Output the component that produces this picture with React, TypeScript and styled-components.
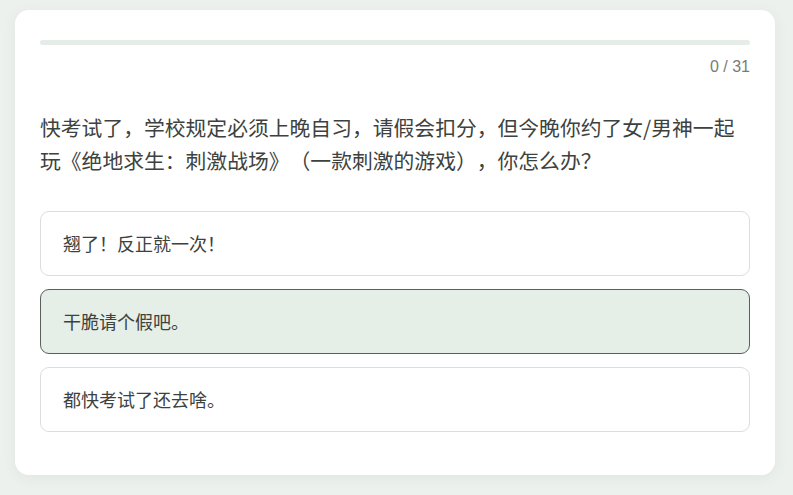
import styled, { createGlobalStyle } from 'styled-components'

const GlobalStyle = createGlobalStyle`
  html, body {
    margin: 0;
    padding: 0;
    background: #edf1ee;
  }
  body {
    font-family: "Noto Sans CJK SC", "Noto Sans", "Liberation Sans", sans-serif;
    color: #3d423e;
    text-spacing-trim: space-all;
  }
`

const Page = styled('div')`
  padding: 10px 18px 20px 15px;
`

const Card = styled('div')`
  width: 760px;
  box-sizing: border-box;
  background: #fff;
  border-radius: 14px;
  box-shadow: 0 3px 14px rgba(60, 80, 65, 0.07);
  padding: 30px 25px;
`

const Progress = styled('div')`
  height: 5px;
  border-radius: 3px;
  background: #e6ece8;
  overflow: hidden;
`

const ProgressFill = styled('div')`
  height: 100%;
  background: #6f8a74;
`

const Counter = styled('div')`
  margin-top: 11px;
  text-align: right;
  font-family: "Liberation Sans", Arial, sans-serif;
  font-size: 16px;
  line-height: 22px;
  color: #777c78;
`

const Question = styled('p')`
  margin: 33px 0 33px;
  font-size: 20.8px;
  line-height: 33.3px;
  color: #3d423e;
`

const Options = styled('div')`
  display: flex;
  flex-direction: column;
`

const Option = styled('div')<{ $selected?: boolean }>`
  margin-bottom: 13px;
  padding: 20px 22px;
  font-size: 18px;
  line-height: 23px;
  border-radius: 9px;
  border: 1px solid ${(p) => (p.$selected ? '#56615a' : '#dcdedc')};
  background: ${(p) => (p.$selected ? '#e6efe7' : '#fff')};
  color: #3d423e;
  cursor: pointer;
`

const options = ['翘了！反正就一次！', '干脆请个假吧。', '都快考试了还去啥。']

export default function App() {
  const current = 0
  const total = 31
  const selected = 1
  return (
    <Page>
      <GlobalStyle />
      <Card>
        <Progress>
          <ProgressFill style={{ width: `${(current / total) * 100}%` }} />
        </Progress>
        <Counter>
          {current} / {total}
        </Counter>
        <Question>
          快考试了，学校规定必须上晚自习，请假会扣分，但今晚你约了女/男神一起玩《绝地求生：刺激战场》（一款刺激的游戏），你怎么办？
        </Question>
        <Options>
          {options.map((o, i) => (
            <Option key={o} $selected={i === selected}>
              {o}
            </Option>
          ))}
        </Options>
      </Card>
    </Page>
  )
}
